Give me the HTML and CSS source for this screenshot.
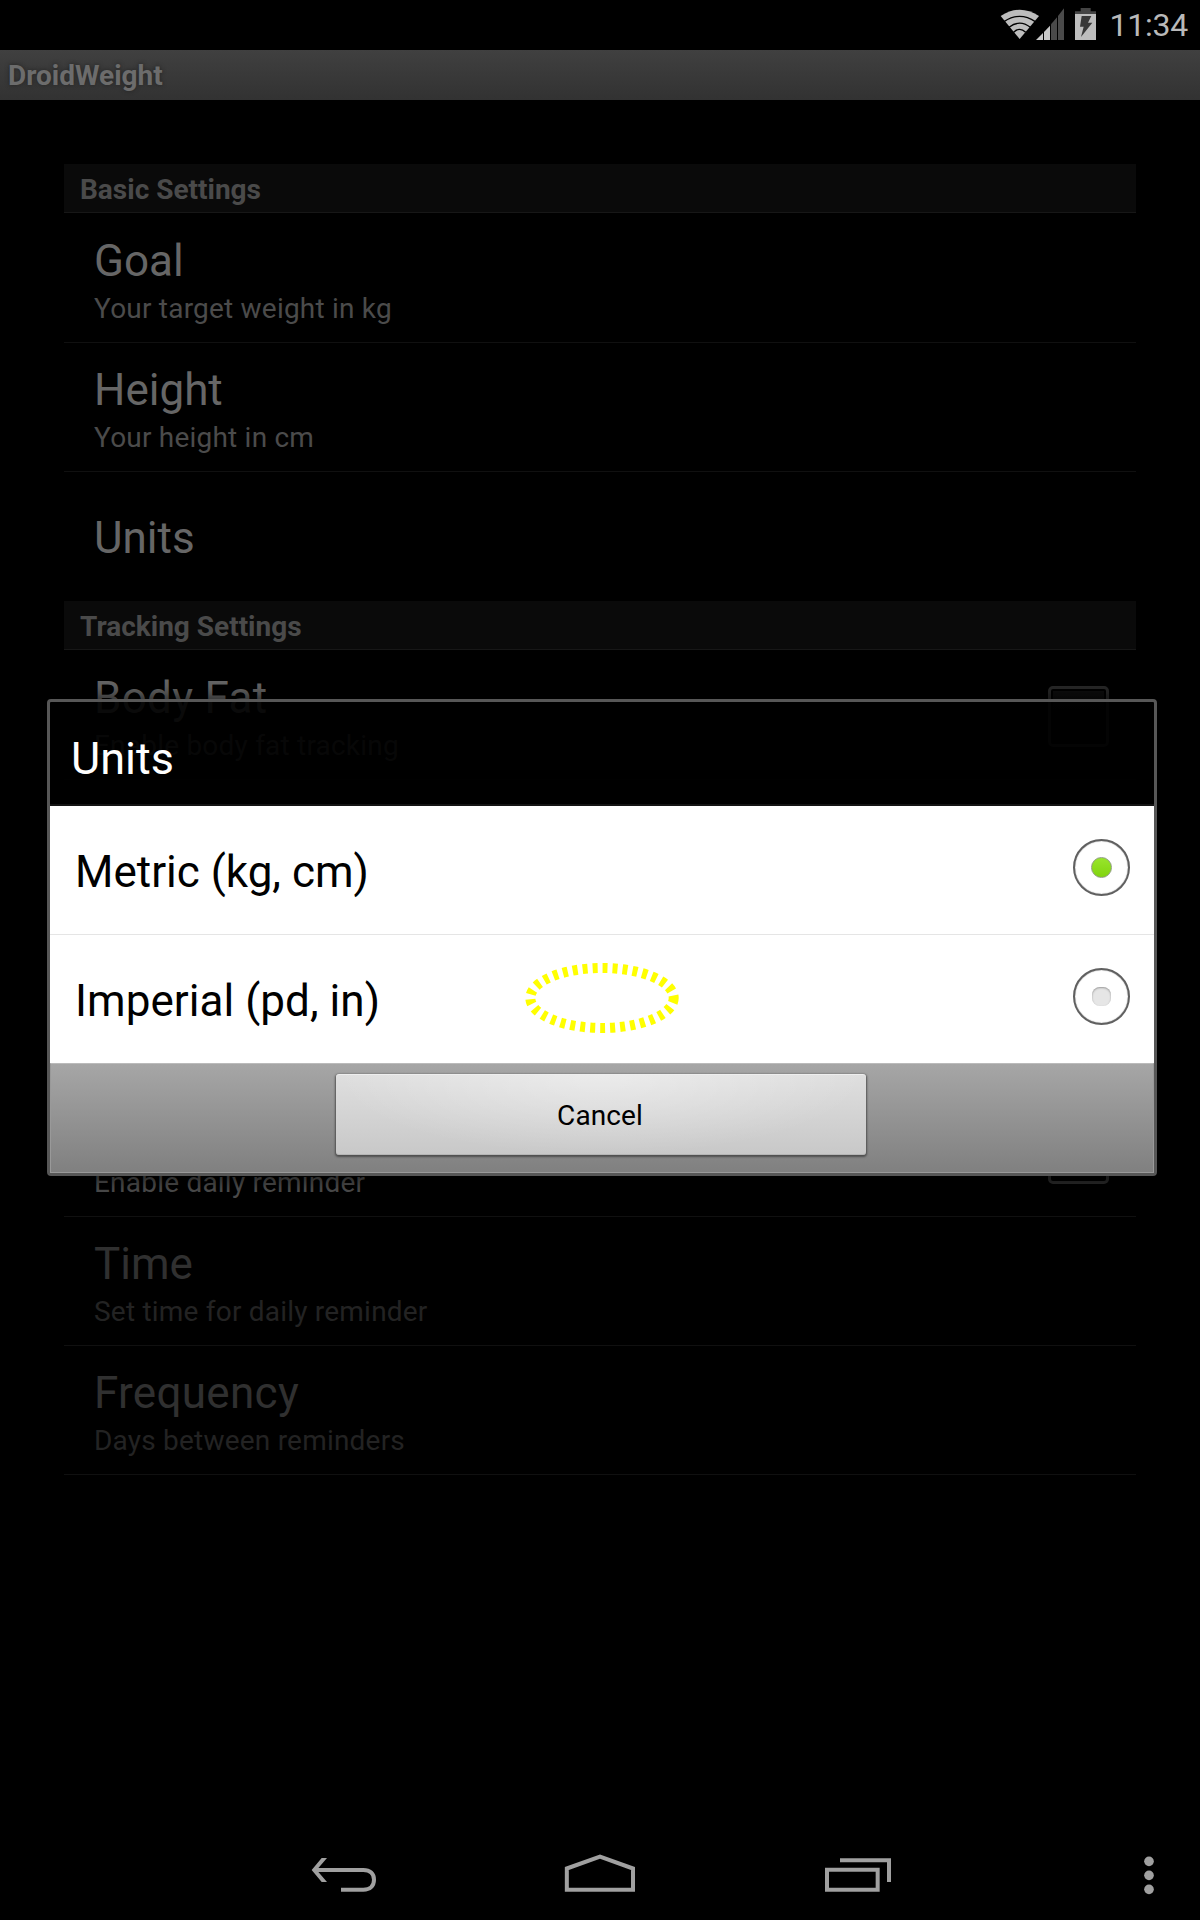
FILE: index.html
```
<!DOCTYPE html>
<html lang="en">
<head>
<meta charset="utf-8">
<title>DroidWeight</title>
<link rel="stylesheet" href="styles.css">
</head>
<body>
<div class="screen">
  <header class="status-bar">
    <svg class="status-icons" viewBox="0 0 300 150" aria-hidden="true">
      <path d="M119 117 62 48Q119 10 177 48Z" fill="#bdbdbd"/>
      <g fill="none" stroke="#000" stroke-width="4">
        <path d="M72 65Q119 33 166 65"/>
        <path d="M87 82Q119 57 151 82"/>
        <path d="M101 97Q119 79 137 97"/>
      </g>
      <path d="M168 120 189 99V120Z" fill="#c8c8c8"/>
      <path d="M192 96 210 77V120H192Z" fill="#c8c8c8"/>
      <path d="M213 73 231 52V120H213Z" fill="#4a4a4a"/>
      <path d="M234 48 252 25V120H234Z" fill="#4a4a4a"/>
    </svg>
    <svg class="battery" viewBox="0 0 63 96" aria-hidden="true">
      <path d="M17 0H47V10H63V18H0V10H17Z" fill="#444"/>
      <path d="M0 18H63V96H0Z" fill="#bdbdbd"/>
      <path d="M20 24H49L39 44H52L18 87L26 56H15Z" fill="#383838"/>
    </svg>
    <span class="clock">11:34</span>
  </header>
  <div class="title-bar">DroidWeight</div>

  <main class="settings">
    <h2 class="category">Basic Settings</h2>
    <div class="row">
      <div class="row-title">Goal</div>
      <div class="row-summary">Your target weight in kg</div>
    </div>
    <div class="row">
      <div class="row-title">Height</div>
      <div class="row-summary">Your height in cm</div>
    </div>
    <div class="row single">
      <div class="row-title">Units</div>
    </div>
    <h2 class="category">Tracking Settings</h2>
    <div class="row with-check">
      <div>
        <div class="row-title wide">Body Fat</div>
        <div class="row-summary">Enable body fat tracking</div>
      </div>
      <span class="checkbox"></span>
    </div>
    <div class="row covered"></div>
    <div class="row covered"></div>
    <div class="category covered"></div>
    <div class="row with-check reminder">
      <div class="row-summary">Enable daily reminder</div>
      <span class="checkbox"></span>
    </div>
    <div class="row disabled">
      <div class="row-title">Time</div>
      <div class="row-summary">Set time for daily reminder</div>
    </div>
    <div class="row disabled">
      <div class="row-title wide">Frequency</div>
      <div class="row-summary">Days between reminders</div>
    </div>
  </main>

  <nav class="nav-bar">
    <svg class="nav-back" viewBox="60 75 204 120"><path d="M72 120H220C240 120 252 131 252 149C252 168 240 179 220 179H153" fill="none" stroke="#a0a0a0" stroke-width="12"/><path d="M95 84H111L80 120L111 156H95L65 120Z" fill="#a0a0a0"/></svg>
    <svg class="nav-home" viewBox="819 66 222 129"><path d="M830.500 115.500 930 80 1029 115.500V179H830.500Z" fill="none" stroke="#a0a0a0" stroke-width="12"/></svg>
    <svg class="nav-recent" viewBox="69 75 210 120"><path d="M81 119.500H233V179.500H81ZM120 90.500H267V156" fill="none" stroke="#a0a0a0" stroke-width="12"/></svg>
    <svg class="nav-menu" viewBox="1029 75 36 123"><g fill="#a0a0a0"><circle cx="1047" cy="94" r="14.500"/><circle cx="1047" cy="136" r="14.500"/><circle cx="1047" cy="178" r="14.500"/></g></svg>
  </nav>

  <section class="dialog">
    <h1 class="dialog-title">Units</h1>
    <div class="options">
      <div class="option">
        <span>Metric (kg, cm)</span>
        <span class="radio"><i class="dot on"></i></span>
      </div>
      <div class="option">
        <span>Imperial (pd, in)</span>
        <span class="radio"><i class="dot"></i></span>
      </div>
      <svg class="touch-mark" viewBox="0 0 160 80"><ellipse cx="80" cy="40" rx="71.700" ry="30" fill="none" stroke="#ff0" stroke-width="10" stroke-dasharray="5 5"/></svg>
    </div>
    <div class="dialog-footer">
      <button class="cancel">Cancel</button>
    </div>
  </section>
</div>
</body>
</html>
```
FILE: styles.css
```
* { box-sizing: border-box; }

body {
  margin: 0;
  background: #000;
  font-family: Roboto, "Noto Sans", sans-serif;
}

.screen {
  position: relative;
  display: flex;
  flex-direction: column;
  width: 1200px;
  height: 1920px;
  overflow: hidden;
  background: #000;
}

/* System status bar */
.status-bar {
  display: flex;
  justify-content: flex-end;
  height: 50px;
  padding-right: 12px;
}

.status-icons {
  width: 100px;
  height: 50px;
  margin-right: -5px;
}

.battery {
  width: 21px;
  height: 32px;
  margin: 8px 14px 0 0;
}

.clock {
  color: #b9b9b9;
  font-size: 32px;
  line-height: 51px;
  letter-spacing: -0.25px;
}

.title-bar {
  height: 50px;
  padding-left: 8px;
  background: linear-gradient(#404040, #323232);
  color: #6c6c6c;
  font-size: 28px;
  font-weight: 700;
  line-height: 51px;
  text-shadow: 0 0 4px #222;
}

/* Preference list */
.settings {
  flex: 1;
  padding: 64px 64px 0;
}

.category {
  height: 49px;
  margin: 0 0 1px;
  padding-left: 16px;
  border-bottom: 1px solid #171717;
  background: #0a0a0a;
  color: #4a4a4a;
  font-size: 28px;
  font-weight: 700;
  line-height: 51px;
}

.row {
  height: 129px;
  padding: 21px 29px 0 30px;
  border-bottom: 1px solid #101010;
}

.row.single {
  padding-top: 40px;
  border-bottom: 0;
}

.row-title {
  color: #666;
  font-size: 44px;
  line-height: 52px;
}

.row-title.wide { letter-spacing: 0.3px; }

.row-summary {
  margin-top: 5px;
  color: #4b4b4b;
  font-size: 28px;
  line-height: 34px;
  letter-spacing: 0.21px;
}

.disabled .row-title { color: #303030; }
.disabled .row-summary { color: #232323; }
.covered { visibility: hidden; }

.with-check {
  display: flex;
  justify-content: space-between;
  padding-right: 27px;
}

.reminder .row-summary { margin-top: 57px; }

.checkbox {
  width: 61px;
  height: 61px;
  margin-top: 14px;
  padding: 2px;
  border: 3px solid #292929;
  border-radius: 5px;
  background: linear-gradient(#0e0e0e, #000) content-box;
}

/* System navigation bar */
.nav-bar {
  display: flex;
  align-items: flex-start;
  height: 96px;
  padding: 31px 0 0 310px;
}

.nav-back { width: 68px; height: 40px; }
.nav-home { width: 74px; height: 43px; margin: -3px 0 0 185px; }
.nav-recent { width: 70px; height: 40px; margin-left: 186px; }
.nav-menu { width: 12px; height: 41px; margin-left: 250px; }

/* Units dialog, floating over the list */
.dialog {
  position: absolute;
  top: 699px;
  left: 47px;
  width: 1110px;
  height: 477px;
  border: 3px solid #575757;
  border-radius: 4px;
  background: rgba(0, 0, 0, 0.9);
  background-clip: padding-box;
  box-shadow: 0 0 18px 2px rgba(0, 0, 0, 0.7);
}

.dialog-title {
  height: 104px;
  margin: 0;
  padding-left: 21px;
  border-bottom: 2px solid #141414;
  color: #fff;
  font-size: 45px;
  font-weight: 400;
  line-height: 113px;
}

.options {
  position: relative;
  background: #fff;
}

.option {
  display: flex;
  justify-content: space-between;
  height: 128px;
  padding: 0 24px 0 25px;
  color: #000;
  font-size: 44px;
  line-height: 132px;
}

.option + .option {
  height: 129px;
  border-top: 1px solid #e5e5e5;
  letter-spacing: 0.05px;
}

.radio {
  display: flex;
  align-items: center;
  justify-content: center;
  width: 57px;
  height: 57px;
  margin-top: 33px;
  border: 2px solid #606060;
  border-radius: 50%;
  box-shadow: inset 0 0 1px #555;
}

.dot {
  width: 19px;
  height: 19px;
  border-radius: 8px;
  background: #e6e6e6;
  box-shadow: inset 0 1px 2px #999;
}

.dot.on {
  width: 21px;
  height: 21px;
  border: 1px solid #8f9c80;
  border-radius: 50%;
  background: linear-gradient(#98e52c, #82d40f);
  box-shadow: none;
}

.touch-mark {
  position: absolute;
  left: 472px;
  top: 152px;
  width: 160px;
  height: 80px;
}

.dialog-footer {
  display: flex;
  justify-content: center;
  height: 110px;
  padding: 10px 2px 0 0;
  border: 1px solid #999;
  border-top: 1px solid #bbb;
  background: linear-gradient(#a6a6a6, #808080);
}

.cancel {
  width: 530px;
  height: 81px;
  padding: 2px 2px 0 0;
  border: 0;
  border-radius: 3px;
  background:
    radial-gradient(ellipse 50% 100% at 50% 0, rgba(255, 255, 255, 0.4), rgba(255, 255, 255, 0)),
    linear-gradient(#dfdfdf, #c8c8c8);
  box-shadow: 0 1px 2px 1px rgba(60, 60, 60, 0.75), inset 0 1px 0 #eee, inset 0 -1px 0 #b5b5b5;
  color: #000;
  font: 28px Roboto, "Noto Sans", sans-serif;
  letter-spacing: 0.1px;
}
```
